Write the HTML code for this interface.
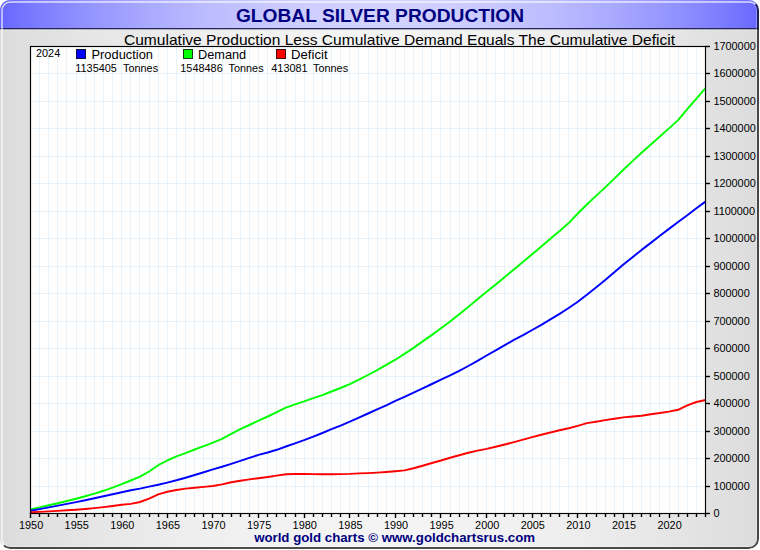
<!DOCTYPE html>
<html><head><meta charset="utf-8"><title>Global Silver Production</title>
<style>
html,body{margin:0;padding:0;background:#fff;}
body{width:760px;height:550px;overflow:hidden;font-family:"Liberation Sans",Arial,sans-serif;}
svg{display:block;font-family:"Liberation Sans",Arial,sans-serif;}
</style></head><body>
<svg width="760" height="550" viewBox="0 0 760 550">
<defs>
<linearGradient id="hd" x1="0" x2="1" y1="0" y2="0"><stop offset="0.000" stop-color="#6666ff"/><stop offset="0.025" stop-color="#7272ff"/><stop offset="0.050" stop-color="#7c7cff"/><stop offset="0.075" stop-color="#8585ff"/><stop offset="0.100" stop-color="#8e8eff"/><stop offset="0.125" stop-color="#9696ff"/><stop offset="0.150" stop-color="#9d9dff"/><stop offset="0.175" stop-color="#a4a4ff"/><stop offset="0.200" stop-color="#ababff"/><stop offset="0.225" stop-color="#b1b1ff"/><stop offset="0.250" stop-color="#b6b6ff"/><stop offset="0.275" stop-color="#bcbcff"/><stop offset="0.300" stop-color="#c0c0ff"/><stop offset="0.325" stop-color="#c4c4ff"/><stop offset="0.350" stop-color="#c8c8ff"/><stop offset="0.375" stop-color="#cbcbff"/><stop offset="0.400" stop-color="#cdcdff"/><stop offset="0.425" stop-color="#cfcfff"/><stop offset="0.450" stop-color="#d1d1ff"/><stop offset="0.475" stop-color="#d2d2ff"/><stop offset="0.500" stop-color="#d2d2ff"/><stop offset="0.525" stop-color="#d2d2ff"/><stop offset="0.550" stop-color="#d1d1ff"/><stop offset="0.575" stop-color="#cfcfff"/><stop offset="0.600" stop-color="#cdcdff"/><stop offset="0.625" stop-color="#cbcbff"/><stop offset="0.650" stop-color="#c8c8ff"/><stop offset="0.675" stop-color="#c4c4ff"/><stop offset="0.700" stop-color="#c0c0ff"/><stop offset="0.725" stop-color="#bcbcff"/><stop offset="0.750" stop-color="#b6b6ff"/><stop offset="0.775" stop-color="#b1b1ff"/><stop offset="0.800" stop-color="#ababff"/><stop offset="0.825" stop-color="#a4a4ff"/><stop offset="0.850" stop-color="#9d9dff"/><stop offset="0.875" stop-color="#9696ff"/><stop offset="0.900" stop-color="#8e8eff"/><stop offset="0.925" stop-color="#8585ff"/><stop offset="0.950" stop-color="#7c7cff"/><stop offset="0.975" stop-color="#7272ff"/><stop offset="1.000" stop-color="#6666ff"/></linearGradient>
<linearGradient id="bg" x1="0" x2="1" y1="0" y2="0"><stop offset="0.000" stop-color="#dbdbdb"/><stop offset="0.025" stop-color="#dedede"/><stop offset="0.050" stop-color="#e0e0e0"/><stop offset="0.075" stop-color="#e2e2e2"/><stop offset="0.100" stop-color="#e4e4e4"/><stop offset="0.125" stop-color="#e6e6e6"/><stop offset="0.150" stop-color="#e8e8e8"/><stop offset="0.175" stop-color="#e9e9e9"/><stop offset="0.200" stop-color="#ebebeb"/><stop offset="0.225" stop-color="#ececec"/><stop offset="0.250" stop-color="#eeeeee"/><stop offset="0.275" stop-color="#efefef"/><stop offset="0.300" stop-color="#f0f0f0"/><stop offset="0.325" stop-color="#f1f1f1"/><stop offset="0.350" stop-color="#f2f2f2"/><stop offset="0.375" stop-color="#f2f2f2"/><stop offset="0.400" stop-color="#f3f3f3"/><stop offset="0.425" stop-color="#f3f3f3"/><stop offset="0.450" stop-color="#f4f4f4"/><stop offset="0.475" stop-color="#f4f4f4"/><stop offset="0.500" stop-color="#f4f4f4"/><stop offset="0.525" stop-color="#f4f4f4"/><stop offset="0.550" stop-color="#f4f4f4"/><stop offset="0.575" stop-color="#f3f3f3"/><stop offset="0.600" stop-color="#f3f3f3"/><stop offset="0.625" stop-color="#f2f2f2"/><stop offset="0.650" stop-color="#f2f2f2"/><stop offset="0.675" stop-color="#f1f1f1"/><stop offset="0.700" stop-color="#f0f0f0"/><stop offset="0.725" stop-color="#efefef"/><stop offset="0.750" stop-color="#eeeeee"/><stop offset="0.775" stop-color="#ececec"/><stop offset="0.800" stop-color="#ebebeb"/><stop offset="0.825" stop-color="#e9e9e9"/><stop offset="0.850" stop-color="#e8e8e8"/><stop offset="0.875" stop-color="#e6e6e6"/><stop offset="0.900" stop-color="#e4e4e4"/><stop offset="0.925" stop-color="#e2e2e2"/><stop offset="0.950" stop-color="#e0e0e0"/><stop offset="0.975" stop-color="#dedede"/><stop offset="1.000" stop-color="#dbdbdb"/></linearGradient>
<clipPath id="fr"><rect x="0" y="0" width="759" height="549" rx="10" ry="10"/></clipPath>
<clipPath id="tl"><path d="M0,0 H760 L745,14 H14 V536 L0,550 Z"/></clipPath>
<clipPath id="br"><path d="M760,0 V550 H0 L8,541 H751 V9 Z"/></clipPath>
</defs>
<g clip-path="url(#fr)">
<rect x="0" y="0" width="760" height="550" fill="url(#bg)"/>
<rect x="0" y="0" width="760" height="29" fill="url(#hd)"/>
<rect x="0" y="28" width="760" height="1.5" fill="#26265e"/>
<rect x="0" y="29.5" width="760" height="1" fill="#ebebe6" opacity="0.8"/>
<g clip-path="url(#tl)"><rect x="2" y="2" width="756" height="546" rx="8.5" ry="8.5" fill="none" stroke="#fff" stroke-opacity="0.75" stroke-width="1.5"/></g>
<g clip-path="url(#br)"><rect x="3.5" y="3.5" width="753" height="543" rx="7" ry="7" fill="none" stroke="#fff" stroke-opacity="0.28" stroke-width="1"/><rect x="1" y="1" width="757" height="547" rx="9" ry="9" fill="none" stroke="#000" stroke-opacity="0.68" stroke-width="2"/></g>
</g>
<text x="380" y="21.5" text-anchor="middle" font-size="19.2" font-weight="bold" fill="#000080">GLOBAL SILVER PRODUCTION</text>
<text x="399.5" y="44.6" text-anchor="middle" font-size="15.55" fill="#000">Cumulative Production Less Cumulative Demand Equals The Cumulative Deficit</text>
<rect x="30.5" y="46.5" width="675" height="467" fill="#fff"/>
<g stroke="#e7f2fa" stroke-width="1"><line x1="39.5" y1="47" x2="39.5" y2="513"/><line x1="48.5" y1="47" x2="48.5" y2="513"/><line x1="57.5" y1="47" x2="57.5" y2="513"/><line x1="66.5" y1="47" x2="66.5" y2="513"/><line x1="76.5" y1="47" x2="76.5" y2="513"/><line x1="85.5" y1="47" x2="85.5" y2="513"/><line x1="94.5" y1="47" x2="94.5" y2="513"/><line x1="103.5" y1="47" x2="103.5" y2="513"/><line x1="112.5" y1="47" x2="112.5" y2="513"/><line x1="121.5" y1="47" x2="121.5" y2="513"/><line x1="130.5" y1="47" x2="130.5" y2="513"/><line x1="139.5" y1="47" x2="139.5" y2="513"/><line x1="149.5" y1="47" x2="149.5" y2="513"/><line x1="158.5" y1="47" x2="158.5" y2="513"/><line x1="167.5" y1="47" x2="167.5" y2="513"/><line x1="176.5" y1="47" x2="176.5" y2="513"/><line x1="185.5" y1="47" x2="185.5" y2="513"/><line x1="194.5" y1="47" x2="194.5" y2="513"/><line x1="203.5" y1="47" x2="203.5" y2="513"/><line x1="212.5" y1="47" x2="212.5" y2="513"/><line x1="222.5" y1="47" x2="222.5" y2="513"/><line x1="231.5" y1="47" x2="231.5" y2="513"/><line x1="240.5" y1="47" x2="240.5" y2="513"/><line x1="249.5" y1="47" x2="249.5" y2="513"/><line x1="258.5" y1="47" x2="258.5" y2="513"/><line x1="267.5" y1="47" x2="267.5" y2="513"/><line x1="276.5" y1="47" x2="276.5" y2="513"/><line x1="285.5" y1="47" x2="285.5" y2="513"/><line x1="295.5" y1="47" x2="295.5" y2="513"/><line x1="304.5" y1="47" x2="304.5" y2="513"/><line x1="313.5" y1="47" x2="313.5" y2="513"/><line x1="322.5" y1="47" x2="322.5" y2="513"/><line x1="331.5" y1="47" x2="331.5" y2="513"/><line x1="340.5" y1="47" x2="340.5" y2="513"/><line x1="349.5" y1="47" x2="349.5" y2="513"/><line x1="358.5" y1="47" x2="358.5" y2="513"/><line x1="368.5" y1="47" x2="368.5" y2="513"/><line x1="377.5" y1="47" x2="377.5" y2="513"/><line x1="386.5" y1="47" x2="386.5" y2="513"/><line x1="395.5" y1="47" x2="395.5" y2="513"/><line x1="404.5" y1="47" x2="404.5" y2="513"/><line x1="413.5" y1="47" x2="413.5" y2="513"/><line x1="422.5" y1="47" x2="422.5" y2="513"/><line x1="431.5" y1="47" x2="431.5" y2="513"/><line x1="440.5" y1="47" x2="440.5" y2="513"/><line x1="450.5" y1="47" x2="450.5" y2="513"/><line x1="459.5" y1="47" x2="459.5" y2="513"/><line x1="468.5" y1="47" x2="468.5" y2="513"/><line x1="477.5" y1="47" x2="477.5" y2="513"/><line x1="486.5" y1="47" x2="486.5" y2="513"/><line x1="495.5" y1="47" x2="495.5" y2="513"/><line x1="504.5" y1="47" x2="504.5" y2="513"/><line x1="513.5" y1="47" x2="513.5" y2="513"/><line x1="523.5" y1="47" x2="523.5" y2="513"/><line x1="532.5" y1="47" x2="532.5" y2="513"/><line x1="541.5" y1="47" x2="541.5" y2="513"/><line x1="550.5" y1="47" x2="550.5" y2="513"/><line x1="559.5" y1="47" x2="559.5" y2="513"/><line x1="568.5" y1="47" x2="568.5" y2="513"/><line x1="577.5" y1="47" x2="577.5" y2="513"/><line x1="586.5" y1="47" x2="586.5" y2="513"/><line x1="596.5" y1="47" x2="596.5" y2="513"/><line x1="605.5" y1="47" x2="605.5" y2="513"/><line x1="614.5" y1="47" x2="614.5" y2="513"/><line x1="623.5" y1="47" x2="623.5" y2="513"/><line x1="632.5" y1="47" x2="632.5" y2="513"/><line x1="641.5" y1="47" x2="641.5" y2="513"/><line x1="650.5" y1="47" x2="650.5" y2="513"/><line x1="659.5" y1="47" x2="659.5" y2="513"/><line x1="669.5" y1="47" x2="669.5" y2="513"/><line x1="678.5" y1="47" x2="678.5" y2="513"/><line x1="687.5" y1="47" x2="687.5" y2="513"/><line x1="696.5" y1="47" x2="696.5" y2="513"/><line x1="31" y1="486.5" x2="705" y2="486.5"/><line x1="31" y1="458.5" x2="705" y2="458.5"/><line x1="31" y1="431.5" x2="705" y2="431.5"/><line x1="31" y1="403.5" x2="705" y2="403.5"/><line x1="31" y1="376.5" x2="705" y2="376.5"/><line x1="31" y1="348.5" x2="705" y2="348.5"/><line x1="31" y1="321.5" x2="705" y2="321.5"/><line x1="31" y1="293.5" x2="705" y2="293.5"/><line x1="31" y1="266.5" x2="705" y2="266.5"/><line x1="31" y1="238.5" x2="705" y2="238.5"/><line x1="31" y1="211.5" x2="705" y2="211.5"/><line x1="31" y1="183.5" x2="705" y2="183.5"/><line x1="31" y1="156.5" x2="705" y2="156.5"/><line x1="31" y1="128.5" x2="705" y2="128.5"/><line x1="31" y1="101.5" x2="705" y2="101.5"/><line x1="31" y1="73.5" x2="705" y2="73.5"/></g>
<path d="M30.5,509.4 L39.6,507.4 L48.7,505.3 L57.9,503.2 L67.0,501.0 L76.1,498.7 L85.2,496.2 L94.4,493.6 L103.5,490.8 L112.6,487.6 L121.7,484.2 L130.8,480.5 L140.0,476.7 L149.1,471.5 L158.2,465.2 L167.3,460.5 L176.4,456.4 L185.6,453.1 L194.7,449.5 L203.8,446.2 L212.9,442.6 L222.1,438.8 L231.2,433.8 L240.3,429.2 L249.4,425.0 L258.5,420.6 L267.7,416.5 L276.8,412.1 L285.9,407.7 L295.0,404.4 L304.1,401.4 L313.3,398.1 L322.4,395.1 L331.5,391.5 L340.6,388.0 L349.8,384.1 L358.9,379.7 L368.0,375.0 L377.1,370.1 L386.2,364.9 L395.4,359.7 L404.5,353.9 L413.6,347.9 L422.7,341.4 L431.9,334.9 L441.0,328.2 L450.1,321.5 L459.2,314.3 L468.3,306.9 L477.5,299.2 L486.6,291.8 L495.7,284.4 L504.8,277.0 L513.9,269.4 L523.1,261.7 L532.2,254.2 L541.3,246.5 L550.4,238.8 L559.6,231.0 L568.7,223.1 L577.8,213.5 L586.9,204.5 L596.0,195.9 L605.2,187.4 L614.3,178.6 L623.4,169.8 L632.5,161.1 L641.6,152.8 L650.8,144.6 L659.9,136.6 L669.0,128.4 L678.1,120.1 L687.3,109.1 L696.4,98.6 L705.5,88.1" fill="none" stroke="#00ff00" stroke-width="1.95" stroke-linejoin="round"/><path d="M30.5,510.8 L39.6,509.1 L48.7,507.4 L57.9,505.6 L67.0,503.9 L76.1,502.1 L85.2,500.2 L94.4,498.3 L103.5,496.3 L112.6,494.3 L121.7,492.2 L130.8,490.3 L140.0,488.6 L149.1,486.6 L158.2,484.7 L167.3,482.6 L176.4,480.3 L185.6,477.7 L194.7,475.0 L203.8,472.3 L212.9,469.4 L222.1,466.7 L231.2,463.9 L240.3,460.9 L249.4,457.9 L258.5,454.9 L267.7,452.5 L276.8,449.8 L285.9,446.5 L295.0,443.4 L304.1,440.2 L313.3,436.6 L322.4,433.0 L331.5,429.2 L340.6,425.6 L349.8,421.7 L358.9,417.6 L368.0,413.5 L377.1,409.4 L386.2,405.3 L395.4,400.9 L404.5,396.8 L413.6,392.6 L422.7,388.4 L431.9,384.0 L441.0,379.6 L450.1,375.3 L459.2,370.8 L468.3,366.0 L477.5,360.8 L486.6,355.5 L495.7,350.3 L504.8,345.1 L513.9,339.9 L523.1,335.1 L532.2,330.0 L541.3,324.8 L550.4,319.4 L559.6,313.8 L568.7,308.0 L577.8,301.7 L586.9,294.8 L596.0,287.6 L605.2,280.0 L614.3,272.3 L623.4,264.6 L632.5,257.2 L641.6,249.9 L650.8,242.9 L659.9,235.8 L669.0,228.9 L678.1,222.0 L687.3,215.2 L696.4,208.3 L705.5,201.6" fill="none" stroke="#0000ff" stroke-width="1.95" stroke-linejoin="round"/><path d="M30.5,512.3 L39.6,511.9 L48.7,511.4 L57.9,510.9 L67.0,510.3 L76.1,509.7 L85.2,509.0 L94.4,508.1 L103.5,507.1 L112.6,506.0 L121.7,504.8 L130.8,503.9 L140.0,502.0 L149.1,498.7 L158.2,494.4 L167.3,491.8 L176.4,490.0 L185.6,488.6 L194.7,487.7 L203.8,486.9 L212.9,486.0 L222.1,484.4 L231.2,482.2 L240.3,480.8 L249.4,479.4 L258.5,478.3 L267.7,477.0 L276.8,475.6 L285.9,474.2 L295.0,474.0 L304.1,474.0 L313.3,474.1 L322.4,474.2 L331.5,474.2 L340.6,474.1 L349.8,473.9 L358.9,473.4 L368.0,473.1 L377.1,472.6 L386.2,472.0 L395.4,471.2 L404.5,470.4 L413.6,468.2 L422.7,465.7 L431.9,463.0 L441.0,460.5 L450.1,457.7 L459.2,455.3 L468.3,452.8 L477.5,450.6 L486.6,448.9 L495.7,446.7 L504.8,444.5 L513.9,442.1 L523.1,439.6 L532.2,437.1 L541.3,434.7 L550.4,432.5 L559.6,430.3 L568.7,428.3 L577.8,425.9 L586.9,423.1 L596.0,421.7 L605.2,420.1 L614.3,418.7 L623.4,417.4 L632.5,416.5 L641.6,415.7 L650.8,414.3 L659.9,413.0 L669.0,411.6 L678.1,409.8 L687.3,405.3 L696.4,402.0 L705.5,400.0" fill="none" stroke="#ff0000" stroke-width="1.95" stroke-linejoin="round"/>
<rect x="30.5" y="46.5" width="675" height="467" fill="none" stroke="#000" stroke-width="1.15"/>
<g stroke="#000" stroke-width="1.4"><line x1="30.5" y1="513" x2="30.5" y2="518"/><line x1="39.5" y1="513" x2="39.5" y2="517"/><line x1="48.5" y1="513" x2="48.5" y2="517"/><line x1="57.5" y1="513" x2="57.5" y2="517"/><line x1="66.5" y1="513" x2="66.5" y2="517"/><line x1="76.5" y1="513" x2="76.5" y2="518"/><line x1="85.5" y1="513" x2="85.5" y2="517"/><line x1="94.5" y1="513" x2="94.5" y2="517"/><line x1="103.5" y1="513" x2="103.5" y2="517"/><line x1="112.5" y1="513" x2="112.5" y2="517"/><line x1="121.5" y1="513" x2="121.5" y2="518"/><line x1="130.5" y1="513" x2="130.5" y2="517"/><line x1="139.5" y1="513" x2="139.5" y2="517"/><line x1="149.5" y1="513" x2="149.5" y2="517"/><line x1="158.5" y1="513" x2="158.5" y2="517"/><line x1="167.5" y1="513" x2="167.5" y2="518"/><line x1="176.5" y1="513" x2="176.5" y2="517"/><line x1="185.5" y1="513" x2="185.5" y2="517"/><line x1="194.5" y1="513" x2="194.5" y2="517"/><line x1="203.5" y1="513" x2="203.5" y2="517"/><line x1="212.5" y1="513" x2="212.5" y2="518"/><line x1="222.5" y1="513" x2="222.5" y2="517"/><line x1="231.5" y1="513" x2="231.5" y2="517"/><line x1="240.5" y1="513" x2="240.5" y2="517"/><line x1="249.5" y1="513" x2="249.5" y2="517"/><line x1="258.5" y1="513" x2="258.5" y2="518"/><line x1="267.5" y1="513" x2="267.5" y2="517"/><line x1="276.5" y1="513" x2="276.5" y2="517"/><line x1="285.5" y1="513" x2="285.5" y2="517"/><line x1="295.5" y1="513" x2="295.5" y2="517"/><line x1="304.5" y1="513" x2="304.5" y2="518"/><line x1="313.5" y1="513" x2="313.5" y2="517"/><line x1="322.5" y1="513" x2="322.5" y2="517"/><line x1="331.5" y1="513" x2="331.5" y2="517"/><line x1="340.5" y1="513" x2="340.5" y2="517"/><line x1="349.5" y1="513" x2="349.5" y2="518"/><line x1="358.5" y1="513" x2="358.5" y2="517"/><line x1="368.5" y1="513" x2="368.5" y2="517"/><line x1="377.5" y1="513" x2="377.5" y2="517"/><line x1="386.5" y1="513" x2="386.5" y2="517"/><line x1="395.5" y1="513" x2="395.5" y2="518"/><line x1="404.5" y1="513" x2="404.5" y2="517"/><line x1="413.5" y1="513" x2="413.5" y2="517"/><line x1="422.5" y1="513" x2="422.5" y2="517"/><line x1="431.5" y1="513" x2="431.5" y2="517"/><line x1="440.5" y1="513" x2="440.5" y2="518"/><line x1="450.5" y1="513" x2="450.5" y2="517"/><line x1="459.5" y1="513" x2="459.5" y2="517"/><line x1="468.5" y1="513" x2="468.5" y2="517"/><line x1="477.5" y1="513" x2="477.5" y2="517"/><line x1="486.5" y1="513" x2="486.5" y2="518"/><line x1="495.5" y1="513" x2="495.5" y2="517"/><line x1="504.5" y1="513" x2="504.5" y2="517"/><line x1="513.5" y1="513" x2="513.5" y2="517"/><line x1="523.5" y1="513" x2="523.5" y2="517"/><line x1="532.5" y1="513" x2="532.5" y2="518"/><line x1="541.5" y1="513" x2="541.5" y2="517"/><line x1="550.5" y1="513" x2="550.5" y2="517"/><line x1="559.5" y1="513" x2="559.5" y2="517"/><line x1="568.5" y1="513" x2="568.5" y2="517"/><line x1="577.5" y1="513" x2="577.5" y2="518"/><line x1="586.5" y1="513" x2="586.5" y2="517"/><line x1="596.5" y1="513" x2="596.5" y2="517"/><line x1="605.5" y1="513" x2="605.5" y2="517"/><line x1="614.5" y1="513" x2="614.5" y2="517"/><line x1="623.5" y1="513" x2="623.5" y2="518"/><line x1="632.5" y1="513" x2="632.5" y2="517"/><line x1="641.5" y1="513" x2="641.5" y2="517"/><line x1="650.5" y1="513" x2="650.5" y2="517"/><line x1="659.5" y1="513" x2="659.5" y2="517"/><line x1="669.5" y1="513" x2="669.5" y2="518"/><line x1="678.5" y1="513" x2="678.5" y2="517"/><line x1="687.5" y1="513" x2="687.5" y2="517"/><line x1="696.5" y1="513" x2="696.5" y2="517"/><line x1="705.5" y1="513" x2="705.5" y2="517"/><line x1="705" y1="513.5" x2="710" y2="513.5"/><line x1="705" y1="486.5" x2="710" y2="486.5"/><line x1="705" y1="458.5" x2="710" y2="458.5"/><line x1="705" y1="431.5" x2="710" y2="431.5"/><line x1="705" y1="403.5" x2="710" y2="403.5"/><line x1="705" y1="376.5" x2="710" y2="376.5"/><line x1="705" y1="348.5" x2="710" y2="348.5"/><line x1="705" y1="321.5" x2="710" y2="321.5"/><line x1="705" y1="293.5" x2="710" y2="293.5"/><line x1="705" y1="266.5" x2="710" y2="266.5"/><line x1="705" y1="238.5" x2="710" y2="238.5"/><line x1="705" y1="211.5" x2="710" y2="211.5"/><line x1="705" y1="183.5" x2="710" y2="183.5"/><line x1="705" y1="156.5" x2="710" y2="156.5"/><line x1="705" y1="128.5" x2="710" y2="128.5"/><line x1="705" y1="101.5" x2="710" y2="101.5"/><line x1="705" y1="73.5" x2="710" y2="73.5"/><line x1="705" y1="46.5" x2="710" y2="46.5"/></g>
<g font-size="10.9" fill="#000"><text x="31.1" y="528.6" text-anchor="middle">1950</text><text x="76.7" y="528.6" text-anchor="middle">1955</text><text x="122.3" y="528.6" text-anchor="middle">1960</text><text x="167.9" y="528.6" text-anchor="middle">1965</text><text x="213.5" y="528.6" text-anchor="middle">1970</text><text x="259.1" y="528.6" text-anchor="middle">1975</text><text x="304.7" y="528.6" text-anchor="middle">1980</text><text x="350.4" y="528.6" text-anchor="middle">1985</text><text x="396.0" y="528.6" text-anchor="middle">1990</text><text x="441.6" y="528.6" text-anchor="middle">1995</text><text x="487.2" y="528.6" text-anchor="middle">2000</text><text x="532.8" y="528.6" text-anchor="middle">2005</text><text x="578.4" y="528.6" text-anchor="middle">2010</text><text x="624.0" y="528.6" text-anchor="middle">2015</text><text x="669.6" y="528.6" text-anchor="middle">2020</text><text x="713.4" y="517.1">0</text><text x="713.4" y="490.1">100000</text><text x="713.4" y="462.1">200000</text><text x="713.4" y="435.1">300000</text><text x="713.4" y="407.1">400000</text><text x="713.4" y="380.1">500000</text><text x="713.4" y="352.1">600000</text><text x="713.4" y="325.1">700000</text><text x="713.4" y="297.1">800000</text><text x="713.4" y="270.1">900000</text><text x="713.4" y="242.1">1000000</text><text x="713.4" y="215.1">1100000</text><text x="713.4" y="187.1">1200000</text><text x="713.4" y="160.1">1300000</text><text x="713.4" y="132.1">1400000</text><text x="713.4" y="105.1">1500000</text><text x="713.4" y="77.1">1600000</text><text x="713.4" y="50.1">1700000</text></g>
<g font-size="10.9" fill="#000">
<text x="36" y="57.1">2024</text>
<text x="75.3" y="71.6">1135405</text><text x="123" y="71.6">Tonnes</text>
<text x="180.3" y="71.6">1548486</text><text x="228.5" y="71.6">Tonnes</text>
<text x="271.3" y="71.6">413081</text><text x="313" y="71.6">Tonnes</text>
</g>
<g font-size="13" fill="#000">
<text x="91.5" y="58.5" textLength="61.5" lengthAdjust="spacingAndGlyphs">Production</text>
<text x="198" y="58.5" textLength="48.2" lengthAdjust="spacingAndGlyphs">Demand</text>
<text x="291" y="58.5" textLength="36.6" lengthAdjust="spacingAndGlyphs">Deficit</text>
</g>
<rect x="76.5" y="49.5" width="9" height="9" fill="#0000ff" stroke="#101040" stroke-width="1"/>
<rect x="183.5" y="49.5" width="9" height="9" fill="#00ff00" stroke="#104010" stroke-width="1"/>
<rect x="276.5" y="49.5" width="9" height="9" fill="#ff0000" stroke="#401010" stroke-width="1"/>
<text x="394.6" y="541.5" text-anchor="middle" font-size="13.25" font-weight="bold" fill="#000080">world gold charts © www.goldchartsrus.com</text>
</svg>
</body></html>
